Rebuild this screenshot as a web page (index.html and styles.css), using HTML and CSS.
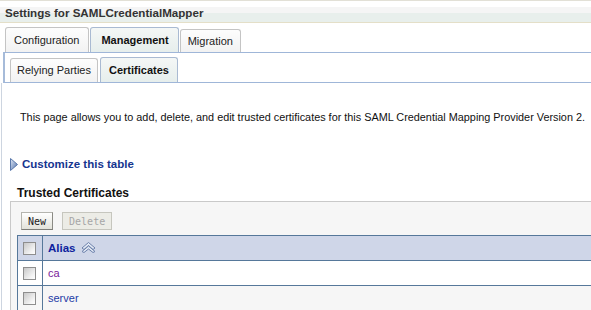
FILE: index.html
```html
<!DOCTYPE html>
<html lang="en">
<head>
  <meta charset="UTF-8">
  <title>Settings for SAMLCredentialMapper</title>
  <link rel="stylesheet" href="styles.css">
</head>
<body>
  <div class="titlebar">
    <h1>Settings for SAMLCredentialMapper</h1>
  </div>

  <!-- Onglets principaux -->
  <div class="tabs main-tabs">
    <span class="tab">Configuration</span>
    <span class="tab selected">Management</span>
    <span class="tab low">Migration</span>
  </div>

  <div class="subpanel">
    <div class="tabs sub-tabs">
      <span class="tab low">Relying Parties</span>
      <span class="tab selected">Certificates</span>
    </div>
  </div>

  <div class="content">
    <p class="intro">This page allows you to add, delete, and edit trusted certificates for this SAML Credential Mapping Provider Version 2.</p>

    <a class="customize" href="#">
      <svg width="8" height="13" viewBox="0 0 8 13">
        <defs>
          <linearGradient id="tri" x1="0" y1="0" x2="1" y2="1">
            <stop offset="0" stop-color="#dfe8f6"/>
            <stop offset="1" stop-color="#4f6fa8"/>
          </linearGradient>
        </defs>
        <polygon points="0.5,0.5 7.5,6.5 0.5,12.5" fill="url(#tri)" stroke="#5a78aa" stroke-width="1"/>
      </svg>
      Customize this table
    </a>

    <h2>Trusted Certificates</h2>

    <div class="panel">
      <div class="toolbar">
        <button class="btn">New</button>
        <button class="btn" disabled>Delete</button>
      </div>
      <table class="grid">
        <tr class="head">
          <th class="sel"><span class="cb"></span></th>
          <th>Alias
            <svg class="sort" width="15" height="11" viewBox="0 0 15 11">
              <polygon points="1,6 7.5,0.5 14,6 12,7.5 7.5,3.5 3,7.5" fill="#e4eaf5" stroke="#6b80aa" stroke-width="1" stroke-linejoin="round"/>
              <polygon points="1,9.5 7.5,4 14,9.5 12,10.5 7.5,7 3,10.5" fill="#e4eaf5" stroke="#6b80aa" stroke-width="1" stroke-linejoin="round"/>
            </svg>
          </th>
        </tr>
        <tr>
          <td class="sel"><span class="cb"></span></td>
          <td><a class="visited" href="#">ca</a></td>
        </tr>
        <tr class="alt">
          <td class="sel"><span class="cb"></span></td>
          <td><a href="#">server</a></td>
        </tr>
      </table>
    </div>
  </div>
</body>
</html>
```

FILE: styles.css
```css
body {
  font-family: "Liberation Sans", Arial, sans-serif;
  font-size: 11px;
  color: #000;
  margin: 0;
  padding: 0;
  overflow: hidden;
  background: #fff;
}
.titlebar {
  border-top: 1px solid #e2e0d6;
  border-bottom: 1px solid #e4dfc8;
  background: linear-gradient(#fff 0, #fff 6px, #f5f5f5 6px, #f5f5f5 12px, #e8efec 12px);
  padding: 3px 5px 0;
  height: 18px;
}
h1 {
  margin: 0;
  font-size: 11.6px;
  line-height: 18px;
  font-weight: bold;
  color: #333;
}
.tabs {
  display: flex;
  align-items: flex-end;
}
.main-tabs {
  margin-top: 4px;
  padding-left: 5px;
  gap: 1px;
}
.tab {
  display: block;
  height: 24px;
  line-height: 24px;
  padding: 0 9px 0 8px;
  border: 1px solid #c4c4c4;
  border-bottom: none;
  border-radius: 3px 3px 0 0;
  background: linear-gradient(#fdfdfd, #f2f2f2);
  color: #222;
}
.tab.low {
  height: 22px;
  line-height: 22px;
  padding: 0 7px;
}
.tab.selected {
  border-color: #a9bad2;
  background: linear-gradient(#f4f7f6, #e6eeec);
  font-weight: bold;
  color: #111;
}
.main-tabs .tab.selected {
  padding: 0 9px 0 10px;
}
.subpanel {
  margin-left: 3px;
  border-top: 1px solid #9fb6d8;
  border-left: 2px solid #a6bbd9;
  border-bottom: 1px solid #9fb6d8;
  padding: 4px 0 0 5px;
}
.sub-tabs {
  gap: 2px;
}
.sub-tabs .tab.low {
  height: 23px;
  line-height: 23px;
  padding: 0 6px;
}
.sub-tabs .tab.selected {
  padding: 0 8px;
}
.content {
  margin-left: 1px;
  border-left: 1px solid #cdd5e0;
  padding-top: 27px;
  height: 200px;
}
.intro {
  margin: 0 0 0 18px;
  font-size: 10.85px;
  line-height: 14px;
  color: #111;
  white-space: nowrap;
}
.customize {
  display: flex;
  align-items: center;
  gap: 4px;
  margin: 32px 0 0 8px;
  font-size: 11.5px;
  font-weight: bold;
  line-height: 16px;
  color: #16358f;
  text-decoration: none;
}
h2 {
  margin: 13px 0 0 15px;
  font-size: 12px;
  line-height: 16px;
  font-weight: bold;
  color: #111;
}
.panel {
  margin-left: 8px;
  border-top: 1px solid #c9c9c9;
  border-left: 1px solid #c9c9c9;
  background: #f6f6f6;
  padding: 10px 0 0 6px;
  height: 98px;
  overflow: hidden;
}
.toolbar {
  display: flex;
  gap: 9px;
  padding-left: 4px;
}
.btn {
  height: 18px;
  padding: 0 6px;
  font-family: "DejaVu Sans Mono", "Liberation Mono", monospace;
  font-size: 10px;
  color: #222;
  border: 1px solid #b4b4ae;
  border-bottom-color: #7d7d78;
  border-right-color: #8a8a84;
  background: linear-gradient(#ffffff, #e2e2da);
  border-radius: 0;
}
.btn:disabled {
  color: #a6a6a6;
  border-color: #c6c6be;
  background: #ecece6;
}
.grid {
  margin-top: 5px;
  width: calc(100% + 2px);
  border-collapse: collapse;
}
.grid th, .grid td {
  height: 24px;
  padding: 0 5px;
  border: 1px solid #56789a;
  border-right: none;
  text-align: left;
  background: #fff;
  font-size: 11px;
}
.grid tr.head th {
  background: #cfd6e8;
  font-weight: bold;
  color: #0d1f9e;
  font-size: 11.5px;
}
.grid tr.alt td {
  background: #f6f6f6;
}
.grid .sel {
  width: 14px;
  padding: 0 5px;
}
.cb {
  display: block;
  width: 11px;
  height: 11px;
  border: 1px solid #8e8e8e;
  background: linear-gradient(135deg, #c8c8c8, #f2f2f2 70%, #fff);
}
.sort {
  vertical-align: -1px;
  margin-left: 2px;
}
.grid a {
  color: #1e3ca6;
  text-decoration: none;
}
.grid a.visited {
  color: #7a1a9a;
}
```
